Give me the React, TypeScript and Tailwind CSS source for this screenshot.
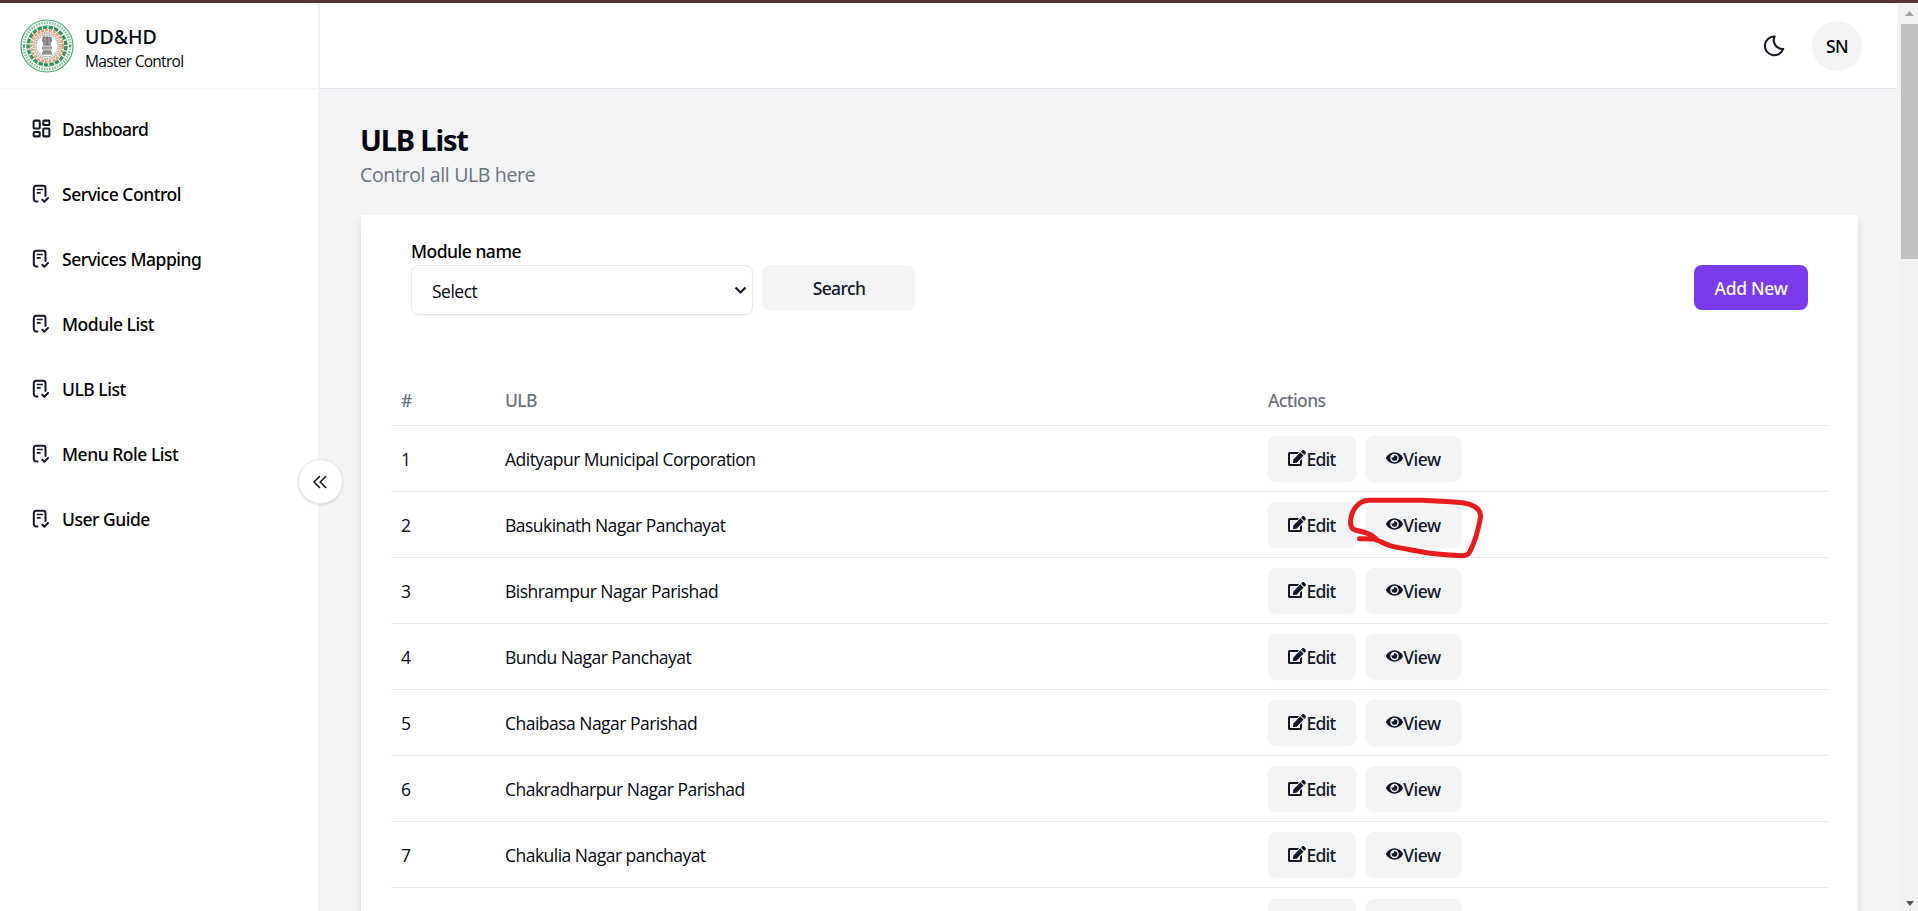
import { LayoutDashboard } from 'lucide-react';
import { FaEdit, FaEye } from 'react-icons/fa';

const navItems = ['Service Control', 'Services Mapping', 'Module List', 'ULB List', 'Menu Role List', 'User Guide'];

const ulbs = [
  'Adityapur Municipal Corporation',
  'Basukinath Nagar Panchayat',
  'Bishrampur Nagar Parishad',
  'Bundu Nagar Panchayat',
  'Chaibasa Nagar Parishad',
  'Chakradharpur Nagar Parishad',
  'Chakulia Nagar panchayat',
];

function Emblem() {
  return (
    <svg className="h-[54px] w-[54px] shrink-0" viewBox="0 0 54 54" fill="none">
      <circle cx="27" cy="27" r="26" fill="#fff" stroke="#4fa673" strokeWidth="1.2" />
      <circle cx="27" cy="27" r="23.2" stroke="#8cc5a2" strokeWidth="2.8" strokeDasharray="1.6 1.1" />
      <circle cx="27" cy="27" r="20.6" stroke="#9fcfb1" strokeWidth="0.6" />
      <circle cx="27" cy="27" r="18.8" stroke="#2f9459" strokeWidth="3.2" strokeDasharray="4.4 1.2" />
      <circle cx="27" cy="27" r="15.8" stroke="#ee9a75" strokeWidth="2.6" strokeDasharray="3 1" />
      <circle cx="27" cy="27" r="13" stroke="#c9a99f" strokeWidth="2.6" strokeDasharray="1.6 0.8" />
      <circle cx="27" cy="27" r="11" stroke="#7dbb94" strokeWidth="0.8" />
      <path d="M22.5 18.5c1-1.6 2.6-1.3 3-.6.6-.9 2.4-.9 3 0 .9-.6 2.2-.4 3.2.8l.3 3.6-1.4 1.2.3 3.2h-7.800l.3-3.200-1.400-1.200z" fill="#7c7c7c" />
      <path d="M22 27.500h10v3H22zM23 31.300h8l1.200 4.200H21.800z" fill="#8c8c8c" />
      <path d="M25 19v7M29 19v7M23 29h8" stroke="#c4c4c4" strokeWidth="0.7" />
      <circle cx="4" cy="27" r="1" fill="#2f9459" />
      <circle cx="50" cy="27" r="1" fill="#2f9459" />
    </svg>
  );
}

function DocCheckIcon() {
  return (
    <svg
      className="h-[20px] w-[18px] shrink-0"
      viewBox="0 0 18 20"
      fill="none"
      stroke="#111827"
      strokeWidth="2"
      strokeLinecap="round"
      strokeLinejoin="round"
    >
      <path d="M5.500 17.500H4.300A2.500 2.500 0 0 1 1.800 15V4A2.200 2.200 0 0 1 4 1.800h7.300A2.200 2.200 0 0 1 13.500 4v8" />
      <path d="M5.500 5.500h4.600M5.500 8.900h2.500" strokeWidth="1.700" />
      <path d="M10.300 15.800l2 1.900 3.700-3.700" />
    </svg>
  );
}

function MoonIcon() {
  return (
    <svg className="h-6 w-6" viewBox="0 0 24 24" fill="none" stroke="#111827" strokeWidth="2.100" strokeLinecap="round" strokeLinejoin="round">
      <path d="M12.600 2.500A9.400 9.400 0 1 0 21.200 15A8.800 8.800 0 0 1 12.600 2.500Z" />
    </svg>
  );
}

function ChevronsIcon() {
  return (
    <svg className="h-[14px] w-[14px]" viewBox="0 0 14 14" fill="none" stroke="#111827" strokeWidth="1.600" strokeLinecap="round" strokeLinejoin="round">
      <path d="M6.500 1.500L1 7l5.500 5.500M12.700 1.500L7.200 7l5.500 5.500" />
    </svg>
  );
}

function Sidebar() {
  return (
    <aside className="relative z-10 flex w-[318px] shrink-0 flex-col bg-white">
      <div className="flex h-[85px] items-center gap-[11px] pl-[20px] shadow-[0_1px_2px_rgba(0,0,0,0.06)]">
        <Emblem />
        <div className="flex flex-col pt-[5px]">
          <span className="font-['Noto_Sans',sans-serif] text-[19.5px] leading-[25px] font-[530] tracking-[0px]">UD&amp;HD</span>
          <span className="text-[15.5px] leading-[24px] tracking-[-0.7px]">Master Control</span>
        </div>
      </div>
      <nav className="flex flex-col pt-[9px] font-['Noto_Sans',sans-serif] text-[17.5px] font-[520] tracking-[-0.48px] text-black">
        <a className="flex h-[65px] items-center">
          <span className="ml-[31px] flex w-[31px] pb-[3px]">
            <LayoutDashboard size={21} color="#111827" strokeWidth={2.3} />
          </span>
          <span className="tracking-[-0.62px]">Dashboard</span>
        </a>
        {navItems.map((item) => (
          <a key={item} className="flex h-[65px] items-center">
            <span className="ml-[32px] flex w-[30px] pb-[2px]">
              <DocCheckIcon />
            </span>
            {item}
          </a>
        ))}
      </nav>
      <button className="absolute top-[456px] left-[298px] flex h-[45px] w-[45px] items-center justify-center rounded-full border border-gray-200 bg-white pr-px shadow-sm">
        <ChevronsIcon />
      </button>
    </aside>
  );
}

function Header() {
  return (
    <header className="flex h-[86px] w-[1577px] shrink-0 items-center justify-end border-b border-[#e2e4ea] bg-white pr-[35px]">
      <div className="mr-[26px]">
        <MoonIcon />
      </div>
      <div className="flex h-[50px] w-[50px] items-center justify-center rounded-full bg-gray-100 pt-px font-['Noto_Sans',sans-serif] text-[17.5px] font-[520] tracking-[-0.5px] text-black">
        SN
      </div>
    </header>
  );
}

function RowActions() {
  return (
    <div className="flex gap-[10px] font-['Noto_Sans',sans-serif] font-[520]">
      <button className="flex h-[45px] w-[88px] items-center justify-center rounded-lg bg-gray-100 text-gray-900 shadow-xs">
        <FaEdit className="mb-[2px] h-[16px] w-[18px]" />
        <span className="pt-px tracking-[-0.75px]">Edit</span>
      </button>
      <button className="flex h-[45px] w-[95px] items-center justify-center rounded-lg bg-gray-100 text-gray-900 shadow-xs">
        <FaEye className="mb-[2px] h-[16px] w-[17px]" />
        <span className="pt-px tracking-[-0.5px]">View</span>
      </button>
    </div>
  );
}

function UlbTable() {
  return (
    <div className="mx-[30px] mt-[60px]">
      <div className="flex h-[51px] items-center border-b border-gray-200 pl-[10px] font-['Noto_Sans',sans-serif] font-[530] tracking-[-0.6px] text-[#6b7280]">
        <span className="w-[104px]">#</span>
        <span className="w-[763px]">ULB</span>
        <span>Actions</span>
      </div>
      {ulbs.map((name, i) => (
        <div key={name} className="flex h-[66px] items-center border-b border-gray-200 pl-[10px]">
          <span className="w-[104px] pt-[2px]">{i + 1}</span>
          <span className="w-[763px] pt-[2px] tracking-[-0.52px]">{name}</span>
          <RowActions />
        </div>
      ))}
      <div className="flex h-[66px] items-center gap-[10px] pl-[877px]">
        <div className="h-[45px] w-[88px] rounded-lg bg-gray-100 shadow-xs" />
        <div className="h-[45px] w-[95px] rounded-lg bg-gray-100 shadow-xs" />
      </div>
    </div>
  );
}

function Scrollbar() {
  return (
    <div className="flex w-[19px] shrink-0 flex-col items-end bg-[#f1f1f1]">
      <div className="flex h-[21px] w-[17px] items-center justify-center">
        <svg className="h-[5px] w-[9px]" viewBox="0 0 9 5" fill="#a3a3a3">
          <path d="M0 5L4.500 0L9 5z" />
        </svg>
      </div>
      <div className="h-[235px] w-[17px] bg-[#c1c1c1]" />
      <div className="mt-auto flex h-[15px] w-[17px] items-center justify-center">
        <svg className="h-[5px] w-[8px]" viewBox="0 0 8 5" fill="#505050">
          <path d="M0 0L4 5L8 0z" />
        </svg>
      </div>
    </div>
  );
}

function Annotation() {
  return (
    <svg
      className="absolute top-[487px] left-[1340px] z-20 h-[75px] w-[150px]"
      viewBox="300 330 450 225"
      fill="none"
      stroke="#e81c1c"
      strokeWidth="15"
      strokeLinecap="round"
      strokeLinejoin="round"
    >
      <path d="M358 476L408 477C396 463 380 458 345 450C334 446 331 438 332 424C333 395 352 362 387 361L550 361C600 364 645 366 672 369C705 375 722 388 722 410C716 445 708 480 690 514C684 526 676 527 664 527C630 526 590 522 565 519C530 511 480 506 450 497C430 490 415 480 395 475" />
    </svg>
  );
}

export default function App() {
  return (
    <div className="relative flex h-[911px] w-[1918px] overflow-hidden border-t-[3px] border-[#563438] bg-gray-100 font-['Open_Sans','Noto_Sans',sans-serif] text-[17.5px] text-gray-950">
      <Sidebar />
      <div className="flex w-[1581px] shrink-0 flex-col pl-[2px]">
        <Header />
        <main className="flex flex-col pt-[31px] pl-[41px]">
          <h1 className="-ml-px font-['Noto_Sans',sans-serif] text-[29px] leading-[40px] font-bold tracking-[-1.15px]">ULB List</h1>
          <p className="mt-px -ml-px text-[19.5px] leading-[28px] tracking-[-0.35px] text-[#6b7280]">Control all ULB here</p>
          <section className="mt-[26px] h-[720px] w-[1497px] bg-white shadow-[0_5px_8px_-1px_rgba(30,30,60,0.16)]">
            <div className="flex items-start px-[50px] pt-[26px]">
              <div className="flex flex-col">
                <label className="h-[24px] font-['Noto_Sans',sans-serif] leading-[20px] font-[520] tracking-[-0.5px] text-black">Module name</label>
                <div className="flex h-[50px] w-[342px] items-center justify-between rounded-lg border border-gray-200 pr-[5px] pl-[20px] shadow-xs">
                  <span className="pt-[3px] tracking-[-0.5px]">Select</span>
                  <svg className="h-[9px] w-[13px]" viewBox="0 0 13 9" fill="none" stroke="#111827" strokeWidth="2.200">
                    <path d="M1.500 1.500l5 5 5-5" />
                  </svg>
                </div>
              </div>
              <button className="mt-[24px] ml-[10px] h-[45px] w-[152px] rounded-lg bg-gray-100 pt-px font-['Noto_Sans',sans-serif] font-[520] tracking-[-0.6px] text-gray-900 shadow-xs">
                Search
              </button>
              <button className="mt-[24px] ml-auto h-[45px] w-[114px] rounded-lg bg-[#7c3aed] pt-px font-['Noto_Sans',sans-serif] font-[520] tracking-[-0.3px] text-gray-50 shadow-xs">
                Add New
              </button>
            </div>
            <UlbTable />
          </section>
        </main>
      </div>
      <Scrollbar />
      <Annotation />
    </div>
  );
}
